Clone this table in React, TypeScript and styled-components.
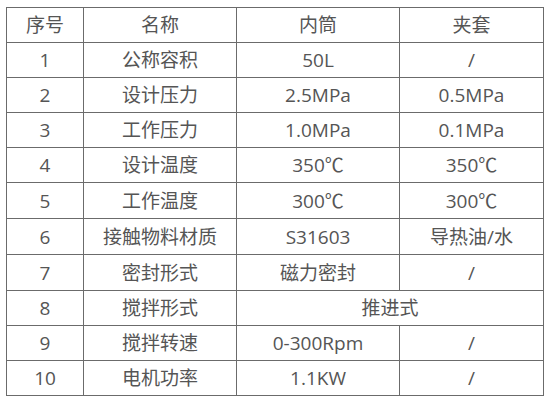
import React from "react";
import styled, { createGlobalStyle } from "styled-components";

const Global = createGlobalStyle`
  html, body { margin: 0; padding: 0; background: #ffffff; }
  body {
    font-family: "Open Sans", "Noto Sans CJK SC", sans-serif;
  }
`;

const Page = styled.div`
  padding: 7px 0 0 6px;
`;

const Table = styled.table`
  border-collapse: separate;
  border-spacing: 0;
  table-layout: fixed;
  width: 538px;
  border-top: 1px solid #6b6b6b;
  border-left: 1px solid #6b6b6b;
  color: #555555;
  font-size: 19px;
  font-family: "Open Sans", "Noto Sans CJK SC", sans-serif;
`;

const Row = styled.tr<{ $tall?: boolean }>`
  height: ${(p) => (p.$tall ? 36 : 35)}px;
`;

const Cell = styled.td`
  box-sizing: border-box;
  padding: 0;
  border-right: 1px solid #6b6b6b;
  border-bottom: 1px solid #6b6b6b;
  text-align: center;
  vertical-align: middle;
  line-height: 20px;
  white-space: nowrap;
`;

const Col = styled.col<{ $w: number }>`
  width: ${(p) => p.$w}px;
`;

type R = { cells: string[]; span?: boolean; tall?: boolean };

const rows: R[] = [
  { cells: ["序号", "名称", "内筒", "夹套"] },
  { cells: ["1", "公称容积", "50L", "/"] },
  { cells: ["2", "设计压力", "2.5MPa", "0.5MPa"] },
  { cells: ["3", "工作压力", "1.0MPa", "0.1MPa"] },
  { cells: ["4", "设计温度", "350℃", "350℃"] },
  { cells: ["5", "工作温度", "300℃", "300℃"], tall: true },
  { cells: ["6", "接触物料材质", "S31603", "导热油/水"], tall: true },
  { cells: ["7", "密封形式", "磁力密封", "/"], tall: true },
  { cells: ["8", "搅拌形式", "推进式"], span: true },
  { cells: ["9", "搅拌转速", "0-300Rpm", "/"] },
  { cells: ["10", "电机功率", "1.1KW", "/"] },
];

export default function App() {
  return (
    <>
      <Global />
      <Page>
        <Table>
          <colgroup>
            <Col $w={77} />
            <Col $w={153} />
            <Col $w={163} />
            <Col $w={144} />
          </colgroup>
          <tbody>
            {rows.map((r, i) => (
              <Row key={i} $tall={r.tall}>
                {r.span ? (
                  <>
                    <Cell>{r.cells[0]}</Cell>
                    <Cell>{r.cells[1]}</Cell>
                    <Cell colSpan={2}>{r.cells[2]}</Cell>
                  </>
                ) : (
                  r.cells.map((c, j) => <Cell key={j}>{c}</Cell>)
                )}
              </Row>
            ))}
          </tbody>
        </Table>
      </Page>
    </>
  );
}
